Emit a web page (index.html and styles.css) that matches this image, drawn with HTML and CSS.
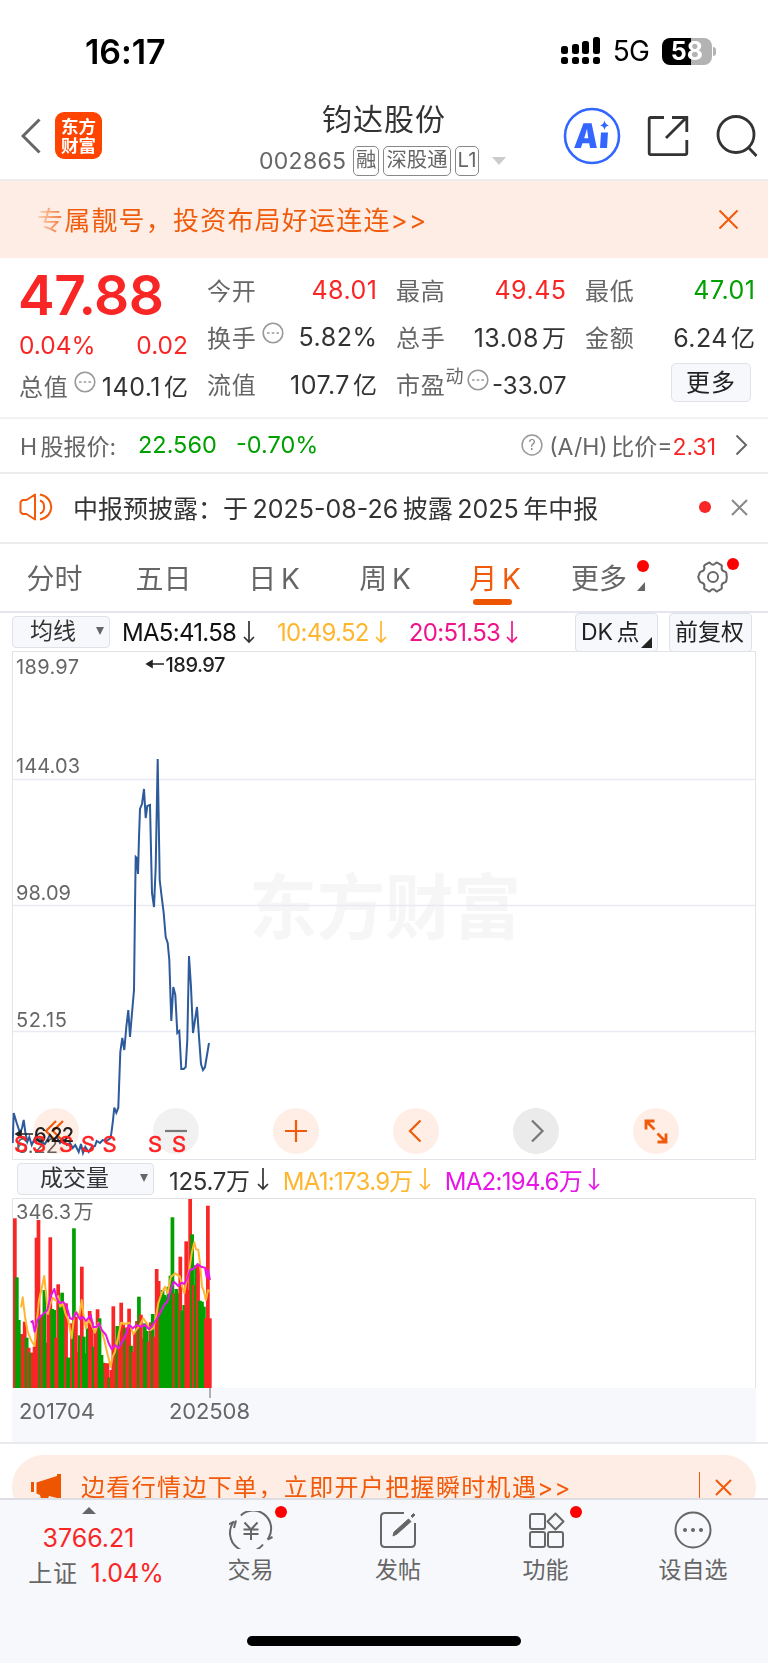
FILE: index.html
```
<!DOCTYPE html>
<html lang="zh-CN">
<head>
  <meta charset="UTF-8">
  <meta name="viewport" content="width=device-width, initial-scale=1.0">
  <title>钧达股份 002865</title>
  <link rel="stylesheet" href="styles.css">
</head>
<body>

  <div class="status-bar">
    <span class="time">16:17</span>
    <div class="status-right">
      <svg class="signal" width="39" height="28" viewBox="0 0 39 28">
        <g fill="#000">
          <rect x="0" y="9" width="7" height="8" rx="2.5"/><rect x="11" y="7" width="7" height="10" rx="2.5"/>
          <rect x="21" y="4" width="7" height="13" rx="2.5"/><rect x="32" y="0" width="7" height="17" rx="2.5"/>
          <rect x="0" y="20" width="7" height="7" rx="2.5"/><rect x="11" y="20" width="7" height="7" rx="2.5"/>
          <rect x="21" y="20" width="7" height="7" rx="2.5"/><rect x="32" y="20" width="7" height="7" rx="2.5"/>
        </g>
      </svg>
      <span class="network">5G</span>
      <div class="battery">58</div>
    </div>
  </div>

  <header class="header">
    <div class="header-left">
      <svg width="20" height="36" viewBox="0 0 20 36"><path d="M18.500 1.500 2 18 18.500 34.500" fill="none" stroke="#666" stroke-width="3"/></svg>
      <div class="logo">东方<br>财富</div>
    </div>
    <div class="header-title">
      <h1>钧达股份</h1>
      <div class="code-row">
        <span class="code">002865</span>
        <span class="badge">融</span><span class="badge">深股通</span><span class="badge badge-l1">L1</span>
        <i class="code-caret"></i>
      </div>
    </div>
    <div class="header-right">
      <svg width="58" height="58" viewBox="0 0 58 58">
        <circle cx="29" cy="29" r="27" fill="#fff" stroke="#3366ff" stroke-width="2.600"/>
        <text class="ai-text" transform="translate(10.500 40.500) skewX(-5)" textLength="24" lengthAdjust="spacingAndGlyphs">A</text>
        <path d="M38 25.500h7l-1 15.500h-7z" fill="#3366ff"/>
        <path d="M41.500 13.500c.8 3 1.800 4 4.500 4.800-2.700.8-3.700 1.800-4.500 4.700-.8-2.900-1.800-3.900-4.500-4.700 2.700-.8 3.700-1.800 4.500-4.800z" fill="#3366ff"/>
      </svg>
      <svg width="42" height="42" viewBox="0 0 42 42" fill="none" stroke="#333" stroke-width="2.800">
        <path d="M17 2.500H4q-1.800 0-1.800 1.800v33.500q0 1.800 1.800 1.800h34q1.800 0 1.800-1.800V25"/>
        <path d="M25 2.500h14.800V17M39 3 19 23"/>
      </svg>
      <svg width="44" height="44" viewBox="0 0 44 44" fill="none" stroke="#333" stroke-width="2.800">
        <circle cx="21" cy="20.500" r="18"/><path d="m33.500 33.500 8 8.500"/>
      </svg>
    </div>
  </header>

  <div class="promo">
    <span class="promo-text">专属靓号，投资布局好运连连&gt;&gt;</span>
    <svg width="21" height="21" viewBox="0 0 21 21"><path d="m1.500 1.500 18 18M19.500 1.500l-18 18" stroke="#f05a0a" stroke-width="2"/></svg>
  </div>

  <section class="quote">
    <div class="quote-price">
      <div class="price">47.88</div>
      <div class="change"><span>0.04%</span><span>0.02</span></div>
      <div class="pair">
        <span class="label">总值</span>
        <svg class="dots" viewBox="0 0 22 22"><circle cx="11" cy="11" r="9.800"/><path d="M5 11h2.600M9.700 11h2.600M14.400 11H17"/></svg>
        <span class="value">140.1<b>亿</b></span>
      </div>
    </div>
    <div class="quote-col">
      <div class="pair"><span class="label">今开</span><span class="value up">48.01</span></div>
      <div class="pair">
        <span class="label">换手</span>
        <svg class="dots" viewBox="0 0 22 22"><circle cx="11" cy="11" r="9.800"/><path d="M5 11h2.600M9.700 11h2.600M14.400 11H17"/></svg>
        <span class="value">5.82%</span>
      </div>
      <div class="pair"><span class="label">流值</span><span class="value">107.7<b>亿</b></span></div>
    </div>
    <div class="quote-col">
      <div class="pair"><span class="label">最高</span><span class="value up">49.45</span></div>
      <div class="pair"><span class="label">总手</span><span class="value">13.08<b>万</b></span></div>
      <div class="pair">
        <span class="label">市盈</span><span class="label-sup">动</span>
        <svg class="dots dots-tight" viewBox="0 0 22 22"><circle cx="11" cy="11" r="9.800"/><path d="M5 11h2.600M9.700 11h2.600M14.400 11H17"/></svg>
        <span class="value pe">-33.07</span>
      </div>
    </div>
    <div class="quote-col">
      <div class="pair"><span class="label">最低</span><span class="value down">47.01</span></div>
      <div class="pair"><span class="label">金额</span><span class="value">6.24<b>亿</b></span></div>
      <div class="pair"><button class="more-btn">更多</button></div>
    </div>
  </section>

  <div class="h-share">
    <span class="h-label">H 股报价:</span>
    <span class="down h-price">22.560</span>
    <span class="down h-change">-0.70%</span>
    <div class="h-ratio">
      <svg width="22" height="22" viewBox="0 0 22 22"><circle cx="11" cy="11" r="9.900" fill="none" stroke="#999" stroke-width="1.500"/><text class="help-mark" x="11" y="16" text-anchor="middle">?</text></svg>
      <span class="ah">(A/H) 比价=<em>2.31</em></span>
      <svg width="13" height="22" viewBox="0 0 13 22"><path d="m1.500 1.500 9.500 9.500-9.500 9.500" fill="none" stroke="#666" stroke-width="2"/></svg>
    </div>
  </div>

  <div class="notice">
    <svg class="speaker" width="34" height="30" viewBox="0 0 34 30" fill="none" stroke="#f05a0a" stroke-width="2">
      <path d="M16 2.500v25L7.500 22H3.500L1.500 20V10l2-2h4z" stroke-linejoin="round"/>
      <path d="M21 8.500c5.500 1.500 5.500 11.500 0 13M21 2.500c15 3 15 22 0 25"/>
    </svg>
    <span class="notice-text">中报预披露：于 2025-08-26 披露 2025 年中报</span>
    <i class="red-dot"></i>
    <svg width="17" height="17" viewBox="0 0 17 17"><path d="m1 1 15 15M16 1 1 16" stroke="#888" stroke-width="2"/></svg>
  </div>

  <nav class="tabs">
    <span class="tab">分时</span>
    <span class="tab">五日</span>
    <span class="tab">日 K</span>
    <span class="tab">周 K</span>
    <span class="tab active">月 K</span>
    <span class="tab more">更多<i class="red-dot"></i><i class="corner"></i></span>
    <span class="tab gear">
      <svg width="32" height="32" viewBox="0 0 32 32" fill="none" stroke="#666" stroke-width="2">
        <path d="M11.500 1.800q1.500-.6 2.200.8 2.300 2.200 4.600 0 .7-1.400 2.200-.8l3.500 2q1.300.8.700 2.300-.6 3.700 3 4.400 1.300.2 1.600 1.400l.5 4.100-.5 4.100q-.3 1.200-1.600 1.400-3.600.7-3 4.400.6 1.500-.7 2.300l-3.500 2q-1.500.6-2.200-.8-2.300-2.200-4.600 0-.7 1.400-2.200.8l-3.500-2q-1.300-.8-.7-2.300.6-3.700-3-4.400-1.300-.2-1.600-1.400L1.200 16l1.500-4.100q.3-1.200 1.600-1.400 3.600-.7 3-4.400-.6-1.500.7-2.300z"/>
        <circle cx="16" cy="16" r="5"/>
      </svg>
      <i class="red-dot"></i>
    </span>
  </nav>

  <div class="ma-row">
    <div class="select">均线<i class="caret"></i></div>
    <span class="ma ma5">MA5:41.58</span><svg class="arrow"><use href="#down"/></svg>
    <span class="ma ma10">10:49.52</span><svg class="arrow ma10"><use href="#down"/></svg>
    <span class="ma ma20">20:51.53</span><svg class="arrow ma20"><use href="#down"/></svg>
    <div class="ma-btns">
      <div class="chip dk">DK 点<i class="corner"></i></div>
      <div class="chip">前复权</div>
    </div>
  </div>

  <!-- monthly price line -->
  <div class="price-chart">
    <svg class="plot" width="744" height="509" viewBox="12 651 744 509">
      <text class="watermark" x="249" y="932.500" textLength="272" lengthAdjust="spacingAndGlyphs">东方财富</text>
      <path class="grid" d="M12 779.500h744M12 905.500h744M12 1031.500h744"/>
      <rect class="frame" x="12.500" y="651.500" width="743" height="508"/>
      <g class="axis">
        <text x="16" y="673.500" textLength="63">189.97</text>
        <text x="16" y="773" textLength="64">144.03</text>
        <text x="16" y="899.500" textLength="55">98.09</text>
        <text x="16" y="1026.500" textLength="51">52.15</text>
        <text x="16" y="1153" textLength="42">6.22</text>
      </g>
      <polyline id="priceLine" class="price-line"/>
      <g class="extreme">
        <path d="M150 664h14M147 664l5-3v6zM19 1134h14M16 1134l5-3v6z"/>
        <text x="165.500" y="671.500" textLength="60">189.97</text>
        <text x="34" y="1141.500" textLength="40">6.22</text>
      </g>
    </svg>
    <div class="tools">
      <span class="tool"><svg viewBox="0 0 46 46"><path d="M23 13 13 23l10 10M30 13 20 23l10 10"/></svg></span>
      <span class="tool gray"><svg viewBox="0 0 46 46"><path d="M12 23h22"/></svg></span>
      <span class="tool"><svg viewBox="0 0 46 46"><path d="M12 23h22M23 12v22"/></svg></span>
      <span class="tool"><svg viewBox="0 0 46 46"><path d="M27.500 12.500 17 23l10.500 10.500"/></svg></span>
      <span class="tool gray dark"><svg viewBox="0 0 46 46"><path d="M19 12.500 29.500 23 19 33.500"/></svg></span>
      <span class="tool expand"><svg viewBox="0 0 46 46"><path d="M21.500 13H13v8.500M13 13l8.500 8.500M24.500 34H33v-8.500M33 34l-8.500-8.500"/></svg></span>
    </div>
    <svg class="marks" width="744" height="40" viewBox="12 1120 744 40">
      <g text-anchor="middle">
        <text x="21" y="1151.500">S</text><text x="39" y="1151.500">S</text><text x="66" y="1151.500">S</text><text x="88" y="1151.500">S</text>
        <text x="109.500" y="1151.500">S</text><text x="155" y="1151.500">S</text><text x="179" y="1151.500">S</text>
      </g>
    </svg>
  </div>

  <div class="vol-row">
    <div class="select vol-select">成交量<i class="caret"></i></div>
    <span class="ma vol">125.7万</span><svg class="arrow vol"><use href="#down"/></svg>
    <span class="ma vol1">MA1:173.9万</span><svg class="arrow vol1"><use href="#down"/></svg>
    <span class="ma vol2">MA2:194.6万</span><svg class="arrow vol2"><use href="#down"/></svg>
  </div>

  <!-- volume bars with two averages -->
  <div class="vol-chart">
    <svg width="744" height="244" viewBox="12 1198 744 244">
      <rect x="12" y="1388" width="744" height="54" fill="#f7f8fb"/>
      <path class="frame" d="M12.500 1388V1198.500h743V1388"/>
      <g id="bars"></g>
      <polyline id="volMa1" class="vol-line" stroke="#ffb62e"/>
      <polyline id="volMa2" class="vol-line" stroke="#e815e8"/>
      <path d="M210 1388v10" stroke="#999" stroke-width="1.500"/>
      <g class="axis">
        <text x="16" y="1218.500" textLength="55">346.3</text><text x="73.500" y="1218.500">万</text>
      </g>
      <g class="dates">
        <text x="19" y="1419" textLength="76">201704</text>
        <text x="169" y="1419" textLength="81">202508</text>
      </g>
    </svg>
  </div>

  <div class="open-account">
    <div class="open-banner">
      <svg width="30" height="28" viewBox="0 0 30 28" fill="#ee5500"><path d="M0 9h3v10H0zM5.500 9.500 26 3V1h4v26h-4v-2l-8-2-2 5-6-2-1-4-3.500-1.500z"/></svg>
      <span class="open-text">边看行情边下单，立即开户把握瞬时机遇&gt;&gt;</span>
      <i class="divider"></i>
      <svg width="17" height="17" viewBox="0 0 17 17"><path d="m1 1 15 15M16 1 1 16" stroke="#f05a0a" stroke-width="2"/></svg>
    </div>
  </div>

  <footer class="bottom-bar">
    <div class="index">
      <i class="up-caret"></i>
      <span class="up index-value">3766.21</span>
      <span class="index-row">上证<em>1.04%</em></span>
    </div>
    <div class="action">
      <svg width="44" height="38" viewBox="0 0 44 38" fill="none" stroke="#666" stroke-width="2">
        <path d="M11.800 4.500A18 18 0 0 1 39.500 27l-1 1.500M38.500 28.500l5-2.500M34 33.500A18 18 0 0 1 5 10.500L0 13.500M7 9.500 5 17"/>
        <path d="m15.500 11.500 6.500 7 6.500-7M14.500 18.500h15M14.500 23h15M22 18.500v10.500"/>
      </svg>
      <span>交易</span><i class="red-dot"></i>
    </div>
    <div class="action">
      <svg width="38" height="38" viewBox="0 0 38 38" fill="none" stroke="#666" stroke-width="2">
        <path d="M25 2H6Q2 2 2 6v26q0 4 4 4h26q4 0 4-4V12"/>
        <path d="M14 25l1-4L29.500 8l2.500 2.500L18 23z M32 5l2.500-2.500 1.500 1.500L33.500 6.500z" fill="#666" stroke-width="1"/>
      </svg>
      <span>发帖</span>
    </div>
    <div class="action">
      <svg width="38" height="38" viewBox="0 0 38 38" fill="none" stroke="#666" stroke-width="2">
        <rect x="3" y="3" width="15" height="15" rx="2"/><rect x="3" y="21" width="15" height="15" rx="2"/><rect x="21" y="21" width="15" height="15" rx="2"/>
        <path d="m28.500 2.500 8 8-8 8-8-8z" stroke-linejoin="round"/>
      </svg>
      <span>功能</span><i class="red-dot"></i>
    </div>
    <div class="action">
      <svg width="38" height="38" viewBox="0 0 38 38" fill="none" stroke="#666" stroke-width="2">
        <circle cx="19" cy="19" r="17.500"/><g fill="#666" stroke="none"><circle cx="11" cy="19" r="2"/><circle cx="19" cy="19" r="2"/><circle cx="27" cy="19" r="2"/></g>
      </svg>
      <span>设自选</span>
    </div>
    <div class="home-indicator"></div>
  </footer>

  <svg class="defs" width="0" height="0">
    <symbol id="down" viewBox="0 0 12 24"><path d="M6 1v21M1 17l5 5 5-5" fill="none" stroke="currentColor" stroke-width="1.700"/></symbol>
  </svg>

  <script src="chart.js"></script>
</body>
</html>
```
FILE: styles.css
```
* {
  box-sizing: border-box;
}
body {
  margin: 0;
  width: 768px;
  height: 1663px;
  overflow: hidden;
  background-color: #fff;
  color: #333;
  font-family: Inter, "Noto Sans CJK SC", sans-serif;
  font-size: 24px;
  display: flex;
  flex-direction: column;
}
body > * {
  flex-shrink: 0;
}
span, h1, button {
  white-space: nowrap;
}
svg {
  display: block;
  flex-shrink: 0;
}
em, b, i {
  font-style: normal;
  font-weight: 400;
}
.up, em {
  color: #f92626;
}
.down {
  color: #00a000;
}
.red-dot {
  width: 12px;
  height: 12px;
  border-radius: 50%;
  background-color: #f00;
}

/* status bar */
.status-bar {
  height: 92px;
  padding: 10px 56px 0 85px;
  display: flex;
  align-items: center;
  justify-content: space-between;
  color: #000;
}
.time {
  font-size: 34px;
  font-weight: 600;
  letter-spacing: -0.1px;
}
.status-right {
  display: flex;
  align-items: center;
}
.network {
  margin: 0 13px;
  font-size: 28px;
  font-weight: 400;
  letter-spacing: -0.8px;
}
.battery {
  position: relative;
  width: 50px;
  height: 27px;
  border-radius: 8px;
  background: linear-gradient(90deg, #000 58%, #b3b3b3 58%);
  color: #fff;
  font-size: 25px;
  font-weight: 700;
  line-height: 27px;
  text-align: center;
}
.battery::after {
  content: "";
  position: absolute;
  right: -4px;
  top: 9px;
  width: 3px;
  height: 9px;
  border-radius: 0 3px 3px 0;
  background-color: #b3b3b3;
}

/* header */
.header {
  height: 89px;
  border-bottom: 2px solid #ececec;
  display: grid;
  grid-template-columns: 259px 250px 1fr;
}
.header-left {
  display: flex;
  align-items: center;
  gap: 14px;
  padding: 0 0 2px 21px;
}
.logo {
  width: 47px;
  height: 47px;
  border-radius: 9px;
  background-color: #ff4400;
  color: #fff;
  font-family: "Noto Sans CJK SC", sans-serif;
  font-size: 17.5px;
  font-weight: 700;
  line-height: 19px;
  padding-top: 4px;
  text-align: center;
}
.header-title h1 {
  margin: 6px 0 0;
  font-size: 30px;
  font-weight: 400;
  line-height: 42px;
  letter-spacing: 1px;
  text-align: center;
}
.code-row {
  display: flex;
  align-items: center;
  height: 40px;
  margin-top: 1px;
}
.code {
  color: #666;
  letter-spacing: 0.3px;
  font-size: 23px;
  width: 94px;
}
.badge {
  height: 30px;
  margin-right: 4px;
  padding: 0 2px;
  border: 1.5px solid #888;
  border-radius: 5px;
  color: #666;
  font-size: 20.4px;
  line-height: 26px;
}
.code-caret {
  margin-left: 9px;
  border: 7px solid transparent;
  border-top: 8px solid #ccc;
  border-bottom: 0;
}
.header-right {
  display: flex;
  align-items: center;
  gap: 26px;
  padding: 0 0 2px 54px;
}
.ai-text {
  font-size: 34px;
  font-weight: 900;
  fill: #3366ff;
}

/* promo */
.promo {
  height: 77px;
  padding: 0 29px 0 37px;
  background-color: #feede4;
  display: flex;
  align-items: center;
  justify-content: space-between;
}
.promo-text {
  padding-bottom: 3px;
  font-size: 26px;
  letter-spacing: 1.2px;
  background: linear-gradient(90deg, #fbd3bb, #f05a0a 34px);
  -webkit-background-clip: text;
  background-clip: text;
  color: transparent;
}

/* quote */
.quote {
  height: 161px;
  padding: 8px 13px 0 19px;
  border-bottom: 2px solid #f2f2f4;
  display: grid;
  grid-template-columns: 169px 170px 170px 170px;
  column-gap: 19px;
}
.price {
  height: 59px;
  margin-left: -1px;
  color: #f92626;
  font-size: 55px;
  font-weight: 600;
  line-height: 58px;
  letter-spacing: -0.5px;
}
.change {
  display: flex;
  justify-content: space-between;
  height: 37px;
  color: #f92626;
  font-size: 24.5px;
  line-height: 40px;
}
.pair {
  display: flex;
  align-items: center;
  height: 47px;
}
.label {
  color: #666;
  letter-spacing: 0.8px;
}
.label-sup {
  align-self: flex-start;
  color: #666;
  font-size: 18px;
  line-height: 34px;
}
.value {
  margin-left: auto;
  margin-right: -0.5px;
  font-size: 25px;
  letter-spacing: 0.5px;
}
.value b {
  margin-left: 3px;
  font-size: 24px;
}
.value.pe {
  margin-top: 4px;
  font-size: 24px;
  letter-spacing: 0;
}
.dots {
  width: 22px;
  height: 22px;
  margin: -8px -4px 0 5px;
  fill: none;
  stroke: #999;
  stroke-width: 1.6;
}
.dots-tight {
  margin-left: 3px;
}
.more-btn {
  width: 80px;
  height: 39px;
  margin: -2px 4px 0 auto;
  padding: 0;
  border: 1.5px solid #e0e3e9;
  border-radius: 5px;
  background-color: #f7f8fb;
  color: #222;
  font: inherit;
  letter-spacing: 1px;
  line-height: 34px;
}

/* h share */
.h-share {
  height: 55px;
  padding: 0 20px 2px;
  border-bottom: 2px solid #ececef;
  display: flex;
  align-items: center;
}
.h-label {
  width: 118px;
  color: #666;
  font-size: 23px;
  word-spacing: -3px;
}
.h-price {
  width: 98px;
}
.h-price, .h-change {
  font-size: 23.5px;
}
.h-ratio {
  margin-left: auto;
  display: flex;
  align-items: center;
  color: #666;
}
.help-mark {
  font-size: 14px;
  fill: #888;
}
.ah {
  margin: 0 19px 0 6px;
  font-size: 23px;
  word-spacing: -3px;
}

/* notice */
.notice {
  height: 70px;
  padding: 0 20px 2px 19px;
  border-bottom: 2px solid #ececef;
  display: flex;
  align-items: center;
}
.notice-text {
  margin: 0 auto 0 20px;
  font-size: 25px;
  word-spacing: -2.5px;
}
.notice .red-dot {
  margin-right: 20px;
  background-color: #f92626;
}

/* period tabs */
.tabs {
  height: 69px;
  padding: 0 0 1px;
  border-bottom: 2px solid #e4e5ee;
  display: grid;
  grid-template-columns: 109px 109px 112px 110px 110px 98px 130px;
  justify-items: center;
  align-items: center;
  color: #666;
  font-size: 28px;
  word-spacing: -3px;
}
.tab {
  position: relative;
}
.tab.active {
  color: #f05a0a;
}
.tab.active::after {
  content: "";
  position: absolute;
  left: 4px;
  bottom: -8px;
  width: 39px;
  height: 6px;
  border-radius: 3px;
  background-color: #ee5500;
}
.tab .red-dot {
  position: absolute;
  right: -22px;
  top: 3px;
}
.gear .red-dot {
  right: -10px;
  top: -3px;
}
.corner {
  position: absolute;
  border-left: 8px solid transparent;
  border-bottom: 9px solid #666;
}
.more .corner {
  right: -18px;
  bottom: 6px;
}

/* indicator rows */
.ma-row, .vol-row {
  display: flex;
  align-items: center;
}
.ma-row {
  height: 38px;
  padding: 0 16px 0 12px;
}
.vol-row {
  height: 38px;
  padding-left: 17px;
}
.select {
  position: relative;
  width: 98px;
  height: 32px;
  padding-left: 17px;
  border: 1.5px solid #dfe2e8;
  border-radius: 4px;
  background-color: #f7f8fb;
  font-size: 23px;
  line-height: 29px;
}
.caret {
  position: absolute;
  right: 5px;
  top: 10px;
  border: 4.5px solid transparent;
  border-top: 8px solid #666;
  border-bottom: 0;
}
.ma {
  margin-left: 12px;
  letter-spacing: -0.7px;
}
.ma5 {
  width: 115px;
  color: #111;
}
.arrow {
  width: 12px;
  height: 24px;
  margin: 0 10px 0 6px;
}
.ma10, .vol1 {
  color: #ffb62e;
}
.ma20 {
  color: #f0148c;
}
.vol2 {
  color: #e815e8;
}
.ma-btns {
  margin-left: auto;
  display: flex;
  gap: 11px;
}
.chip {
  position: relative;
  width: 83px;
  height: 39px;
  border: 1.5px solid #dfe2e8;
  border-radius: 4px;
  background-color: #f7f8fb;
  color: #222;
  font-size: 23px;
  line-height: 37px;
  padding-left: 5px;
  white-space: nowrap;
  word-spacing: -3px;
}
.dk .corner {
  right: 5px;
  bottom: 3px;
  border-left-width: 11px;
  border-bottom: 11px solid #222;
}
.vol-select {
  width: 137px;
  padding-left: 22px;
}
.vol-row .ma {
  margin-left: 14px;
}
.vol-row .vol {
  margin-left: 15px;
  margin-right: 1px;
  letter-spacing: -0.3px;
}
.vol-row .arrow {
  margin: 0 0 0 6px;
}

/* charts */
.price-chart {
  position: relative;
  height: 509px;
  margin: 0 12px;
}
.frame {
  fill: none;
  stroke: #e2e3e8;
}
.grid {
  stroke: #e9ebf2;
  stroke-width: 1.5;
}
.watermark {
  font-family: "Noto Sans CJK SC", sans-serif;
  font-size: 71px;
  font-weight: 700;
  fill: #f6f6f7;
}
.axis {
  font-size: 20px;
  fill: #666;
}
.dates {
  font-size: 22px;
  fill: #666;
}
.price-line {
  fill: none;
  stroke: #2d5a9b;
  stroke-width: 2;
}
.extreme {
  font-size: 20px;
  font-weight: 500;
  fill: #222;
}
.extreme path {
  stroke: #222;
  stroke-width: 1.6;
}
.tools {
  position: absolute;
  left: 21px;
  top: 457px;
  display: flex;
  gap: 74px;
  mix-blend-mode: multiply;
}
.tool {
  width: 46px;
  height: 46px;
  border-radius: 50%;
  background-color: #feeee6;
}
.tool path {
  fill: none;
  stroke: #f05a0a;
  stroke-width: 2.2;
}
.tool.expand path {
  stroke-width: 2.8;
}
.tool.gray {
  background-color: #f1f1f1;
}
.tool.dark {
  background-color: #ebebeb;
}
.tool.gray path {
  stroke: #777;
}
.marks {
  position: absolute;
  left: 0;
  top: 469px;
  font-size: 22px;
  fill: #f22;
  stroke: #f22;
  stroke-width: 0.5;
}
.vol-chart {
  height: 244px;
  margin: 0 12px;
}
.vol-line {
  fill: none;
  stroke-width: 2;
  stroke-linejoin: round;
}

/* open account banner, runs under the bottom bar */
.open-account {
  height: 56px;
  padding: 11px 12px 0;
  border-top: 2px solid #e9eaee;
  overflow: hidden;
}
.open-banner {
  height: 64px;
  padding: 0 24px 0 19px;
  border-radius: 32px;
  background-color: #feede4;
  display: flex;
  align-items: center;
  color: #f05a0a;
}
.open-text {
  margin: 0 auto 0 20px;
  padding-bottom: 3px;
  font-size: 24px;
  letter-spacing: 1.35px;
}
.divider {
  width: 1.5px;
  height: 30px;
  margin-right: 15px;
  background-color: #f05a0a;
}

/* bottom bar */
.bottom-bar {
  position: relative;
  height: 165px;
  border-top: 2px solid #dcdee3;
  background-color: #f7f8fb;
  display: grid;
  grid-template-columns: 177px 147px 148px 147px 148px;
  align-items: start;
  color: #666;
}
.index {
  display: flex;
  flex-direction: column;
  align-items: center;
  padding: 7px 0 0;
}
.up-caret {
  border: 7px solid transparent;
  border-bottom: 7px solid #666;
  border-top: 0;
}
.index-value {
  margin-top: 9px;
  font-size: 25px;
  line-height: 30px;
}
.index-row {
  margin-top: 2px;
  padding-left: 15px;
  line-height: 36px;
  letter-spacing: 0.6px;
}
.index-row em {
  margin-left: 13px;
  font-size: 25px;
  letter-spacing: 0;
}
.action {
  position: relative;
  padding-top: 11px;
  display: flex;
  flex-direction: column;
  align-items: center;
  gap: 2px;
  font-size: 23px;
}
.action .red-dot {
  position: absolute;
  left: 98px;
  top: 6px;
}
.home-indicator {
  position: absolute;
  left: 247px;
  bottom: 17px;
  width: 274px;
  height: 10px;
  border-radius: 5px;
  background-color: #000;
}
```
FILE: chart.js
```
// closing price line, x y pairs
const price = `12.700 1143,13.700 1113,16.700 1123,20 1133,22 1128,23.700 1120,25.300 1132,27.300 1142,29.300 1137,31.700 1145,35 1138,40 1142,45 1144,
50 1135,53.300 1140,56.700 1137,60 1143,63.300 1140,66.700 1145,70 1143,72.700 1148,75.300 1145,78.700 1152,81 1144,83 1153,85.300 1147,88.700 1152,
91.700 1147,95 1146,96.700 1141,100 1143,102.700 1140,106.700 1141,110.700 1138,112.700 1123,114.300 1107.700,116.300 1112.700,118.300 1107.700,
120.300 1052,122.300 1038,124.300 1050,126.300 1027,128.300 1010,130 1037,132 1013,134 990,135 907,135.700 857,136.700 858,138 874,139 837,
140 809,142 804,144 789,145.700 818,147.300 806,150 805,151 850,152 893,154 907,155.700 867,157.700 759,159.700 880,161.700 897,163.700 913,
165.700 937,167.700 943,169.300 960,171.300 1021,173.300 987,175.300 995,177.300 1033,179.300 1031,181.300 1069,183.700 1069,185.700 1067,
187.300 1040,189 956,191 987,193 1033,195 1020,197 1007,199 1037,201 1064,203 1070,205 1067,209 1043`;
document.getElementById('priceLine').setAttribute('points', price);

// volume tops, one per month: colour + distance from the top of the plot (1/3 px)
const volumes = ('r85 g262 g390 g432 r432 r395 g443 r473 g488 r488 r470 r143 r90 g380 r375 g300 g458 r370 r142 g357 g360 r443 r283 g340 g308 ' +
  'g345 r340 g503 g503 r400 g115 r380 r487 g436 r230 g440 g490 g415 r363 r395 g470 r425 r358 g385 g495 g518 r520 r520 g562 r540 ' +
  'r349 r490 g408 r470 r338 r405 g415 r412 r356 g467 r485 r430 r393 g320 r374 r445 g400 g423 r455 r397 g372 r440 r237 r273 g320 ' +
  'g300 g315 g320 g290 g257 g82 r310 g297 g310 r200 g362 g345 r154 r300 r27 g133 r285 g225 r225 g332 g335 g350 r385 r47 r385').split(' ');
const step = 585 / (volumes.length - 1);
document.getElementById('bars').innerHTML = volumes.map((v, i) => {
  const y = 1190 + Number(v.slice(1)) / 3;
  const x = 13 + i * step / 3;
  const color = v[0] === 'r' ? '#f92626' : '#00a000';
  return `<rect x="${x.toFixed(2)}" y="${y.toFixed(1)}" width="3.700" height="${(1388 - y).toFixed(1)}" fill="${color}"/>`;
}).join('');

const ma1 = [63,352,68,322,75,380,83,425,93,450,104,468,110,400,117,330,125,295,133,258,139,320,144,372,150,345,158,323,168,332,175,318,181,350,188,340,
  196,370,205,390,215,445,222,380,228,365,238,378,245,330,252,385,258,415,265,390,275,405,285,428,295,398,303,415,313,450,322,490,332,530,338,500,345,485,
  355,440,363,398,375,402,388,398,400,433,410,418,420,405,430,385,440,400,450,420,460,415,468,380,475,340,485,310,495,290,503,310,512,262,525,250,540,260,
  547,290,553,310,560,270,568,240,575,190,583,157,588,178,595,180,600,220,606,290,612,305,618,330,624,300,630,305];
const ma2 = [92,397,98,393,104,425,112,390,122,378,133,370,142,360,152,318,163,297,170,325,180,340,190,335,200,350,210,385,218,388,228,367,240,388,248,380,
  258,393,272,375,280,412,290,410,297,400,305,420,318,435,326,460,335,478,345,465,355,475,365,458,375,440,388,405,398,415,410,405,422,410,435,405,447,418,
  458,405,468,390,480,370,492,345,502,335,512,300,522,275,535,288,545,278,553,282,562,265,570,240,580,237,593,222,603,230,615,233,620,262,624,240,630,270];
function toPoints(list) {
  return list.map((n, i) => (i % 2 ? 1190 + n / 3 : n / 3).toFixed(1)).join(' ');
}
document.getElementById('volMa1').setAttribute('points', toPoints(ma1));
document.getElementById('volMa2').setAttribute('points', toPoints(ma2));
```
